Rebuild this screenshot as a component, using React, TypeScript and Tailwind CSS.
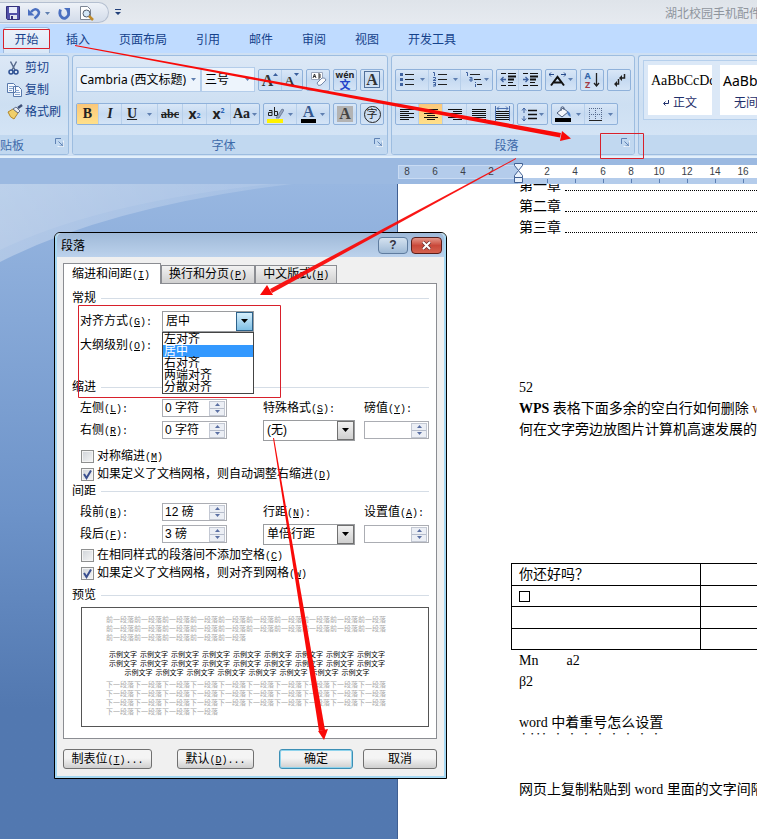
import type { ReactNode } from 'react';

export default function App() {
  return (
    <div className="relative flex min-h-screen flex-col overflow-hidden bg-[#9bb9e1] font-['Noto_Sans','Noto_Sans_CJK_SC',sans-serif] text-xs text-[#15428b]">
      <TitleBar />
      <RibbonTabs />
      <Ribbon />
      <Workspace />
      <ParagraphDialog />
      <Annotations />
    </div>
  );
}

const TitleBar = () => {
  return (
    <header className="flex h-6 shrink-0 items-center bg-gradient-to-b from-[#dfe4ea] to-[#e6eaf0]">
      <div className="flex h-[21px] w-[109px] items-center rounded-r-full border border-l-0 border-[#b4bfd0] bg-gradient-to-b from-[#eef2f8] to-[#d3dcea] pt-0.5 pl-1.5">
        <button aria-label="保存" className="mr-[7px]">
          <SaveIcon />
        </button>
        <button aria-label="撤消" className="mr-1">
          <UndoIcon />
        </button>
        <Caret />
        <button aria-label="重复" className="mr-2 ml-2">
          <RedoIcon />
        </button>
        <button aria-label="打印预览">
          <PreviewIcon />
        </button>
      </div>
      <button aria-label="自定义快速访问工具栏" className="ml-1.5">
        <svg width="6" height="7" viewBox="0 0 6 7" fill="#22407a">
          <path d="M0 0h6v1H0zM0 3h6L3 6z" />
        </svg>
      </button>
      <h1 className="ml-auto w-[92px] overflow-hidden pt-1 whitespace-nowrap text-[#8f959d]">湖北校园手机配件</h1>
    </header>
  );
};

const RibbonTabs = () => {
  return (
    <nav className="flex h-[29px] shrink-0 items-center gap-[29px] bg-[#bfdbff] pl-[3px] whitespace-nowrap">
      <a
        href="#home"
        className="-mr-[13px] flex h-[26px] w-[47px] items-center justify-center self-end rounded-t border border-b-0 border-[#9db8dd] bg-gradient-to-b from-[#edf3fb] to-[#d9e7f7] pb-0.5"
      >
        开始
      </a>
      {tabs.map((tab) => (
        <a key={tab} href="#tab" className="pt-0.5">
          {tab}
        </a>
      ))}
    </nav>
  );
};

const Ribbon = () => {
  return (
    <section className="flex h-[105px] shrink-0 gap-[3px] border-b-2 border-[#e3f0fb] bg-[#cfe0f3] pt-0.5 pb-px">
      <Group title="贴板" className="w-[69px] rounded-l-none border-l-0" titleClassName="text-left">
        <div className="flex flex-col pt-px pl-[7px]">
          <ClipboardItem label="剪切" icon={<CutIcon />} />
          <ClipboardItem label="复制" icon={<CopyIcon />} />
          <ClipboardItem label="格式刷" icon={<BrushIcon />} />
        </div>
      </Group>
      <Group title="字体" className="w-[316px]">
        <FontTools />
      </Group>
      <Group title="段落" className="w-[244px]">
        <ParagraphTools />
      </Group>
      <Group title="" className="flex-1 overflow-hidden rounded-r-none border-r-0" launcher={false}>
        <div className="mt-1 ml-1 flex h-[60px] w-40 gap-2 border border-[#b5cfec] bg-[#dbe8f7] p-1">
          <StyleCard name="正文" mark sampleClassName="font-['Liberation_Serif',serif]" />
          <StyleCard name="无间隔" />
        </div>
      </Group>
    </section>
  );
};

type GroupProps = {
  title: string;
  className: string;
  titleClassName?: string;
  launcher?: boolean;
  children: ReactNode;
};

const Group = ({ title, className, titleClassName = 'text-center', launcher = true, children }: GroupProps) => {
  return (
    <div
      className={`flex shrink-0 flex-col overflow-hidden rounded-[3px] border border-[#9dbde0] bg-gradient-to-b from-[#dce8f6] via-[#cddff2] to-[#d8e7f7] ${className}`}
    >
      <div className="flex-1">{children}</div>
      <div className="flex h-[19px] items-center bg-[#c1d8f0] text-[#3e6aaa]">
        <span className={`flex-1 pt-0.5 ${titleClassName}`}>{title}</span>
        {launcher && (
          <button aria-label={`${title}选项`} className="mr-1 w-[9px] pb-1">
            <svg width="9" height="9" viewBox="0 0 9 9" fill="none" stroke="#5f82b4">
              <path d="M.5 6V.5H6" />
              <path d="M3.500 3.500l4 4M8 4.500v3.500H4.500" />
              <path d="M8.500 2.500v6h-6" stroke="#fff" opacity=".7" />
            </svg>
          </button>
        )}
      </div>
    </div>
  );
};

const ClipboardItem = ({ label, icon }: { label: string; icon: ReactNode }) => {
  return (
    <button className="flex h-[22px] items-center gap-0.5 whitespace-nowrap">
      {icon}
      {label}
    </button>
  );
};

const StyleCard = ({ name, mark, sampleClassName = '' }: { name: string; mark?: boolean; sampleClassName?: string }) => {
  return (
    <button className="flex w-16 shrink-0 flex-col items-center overflow-hidden bg-white pt-1.5 text-[#1f2f6b]">
      <span className={`w-full overflow-hidden pl-[3px] text-left text-sm leading-5 whitespace-nowrap text-black ${sampleClassName}`}>
        AaBbCcDd
      </span>
      <span className="flex items-center gap-1 pt-1 whitespace-nowrap">
        {mark && (
          <svg width="6" height="6" viewBox="0 0 6 6" fill="none" stroke="#1f2f6b">
            <path d="M5.500 0v3.500H1M2.500 1.500l-2 2 2 2" />
          </svg>
        )}
        {name}
      </span>
    </button>
  );
};

const FontTools = () => {
  return (
    <div className="flex flex-col gap-[11px] pt-[11px] pl-[3px]">
      <div className="flex h-[25px] items-center gap-[3px]">
        <div className="flex h-[25px]">
          <Combo label="字体" value="Cambria (西文标题)" className="w-[125px]" />
          <Combo label="字号" value="三号" className="w-[54px]" />
        </div>
        <ToolGroup>
          <Tool label="增大字体" className="w-[23px]">
            <LetterA size={17} mark="up" />
          </Tool>
          <Tool label="缩小字体" className="w-5">
            <LetterA size={14} mark="down" />
          </Tool>
        </ToolGroup>
        <ToolGroup>
          <Tool label="清除格式" className="w-[22px]">
            <EraserIcon />
          </Tool>
        </ToolGroup>
        <ToolGroup>
          <Tool label="拼音指南" className="w-[22px] flex-col font-bold text-[#222]">
            <span className="text-[9px] leading-[9px]">wén</span>
            <span className="text-[11px] leading-[11px] text-[#2543c9]">文</span>
          </Tool>
        </ToolGroup>
        <ToolGroup>
          <Tool label="字符边框" className="w-[22px]">
            <span className="border border-[#51709a] px-px font-['Liberation_Serif',serif] text-base leading-[15px] font-bold text-[#333]">
              A
            </span>
          </Tool>
        </ToolGroup>
      </div>
      <div className="flex gap-[3px] font-['Liberation_Serif',serif] text-sm font-bold text-[#222]">
        <ToolGroup>
          <Tool label="加粗" active className="w-[22px]">
            B
          </Tool>
          <Tool label="倾斜" className="w-[23px] italic">
            I
          </Tool>
          <Tool label="下划线" className="w-9 gap-2.5">
            <span className="underline">U</span>
            <Caret />
          </Tool>
          <Tool label="删除线" className="w-[25px] text-xs line-through">
            abc
          </Tool>
          <Tool label="下标" className="w-6 font-['Noto_Sans',sans-serif]">
            x<sub className="text-[7px] text-[#2b62b4]">2</sub>
          </Tool>
          <Tool label="上标" className="w-6 font-['Noto_Sans',sans-serif]">
            x<sup className="text-[7px] text-[#2b62b4]">2</sup>
          </Tool>
          <Tool label="更改大小写" className="w-7 gap-0.5">
            Aa
            <Caret />
          </Tool>
        </ToolGroup>
        <ToolGroup>
          <Tool label="突出显示" className="w-[33px] gap-1">
            <HighlightIcon />
            <Caret />
          </Tool>
          <Tool label="字体颜色" className="w-8 gap-1">
            <span className="border-b-4 border-black px-0.5 text-base leading-[14px] text-[#35588f]">A</span>
            <Caret />
          </Tool>
        </ToolGroup>
        <ToolGroup>
          <Tool label="字符底纹" className="w-[22px]">
            <span className="bg-[#b3b3b3] px-0.5 text-base leading-4 text-[#444]">A</span>
          </Tool>
        </ToolGroup>
        <ToolGroup>
          <Tool label="带圈字符" className="w-[22px]">
            <span className="flex size-[17px] items-center justify-center rounded-full border border-[#222] font-['Noto_Sans_CJK_SC',sans-serif] text-[11px] font-normal">
              字
            </span>
          </Tool>
        </ToolGroup>
      </div>
    </div>
  );
};

const ParagraphTools = () => {
  return (
    <div className="flex flex-col gap-[11px] pt-[11px] pl-[3px]">
      <div className="flex h-[25px] items-center gap-[3px]">
        <ToolGroup>
          <Tool label="项目符号" className="w-[33px] gap-1.5">
            <svg width="15" height="15" viewBox="0 0 15 15">
              <path d="M6 2.500h9M6 7.500h9M6 12.500h9" stroke="#222" />
              <path d="M1 1h3v3H1zM1 6h3v3H1zM1 11h3v3H1z" fill="#3f62a0" />
            </svg>
            <Caret />
          </Tool>
          <Tool label="编号" className="w-8 gap-1.5">
            <svg width="15" height="15" viewBox="0 0 15 15" fill="none">
              <path d="M6 2.500h9M6 7.500h9M6 12.500h9" stroke="#222" />
              <path d="M1 .5h1.500V4M1 5.500h2.500v1.500L1 8.500h3M1 10.500h2.500v3.500H1M1.500 12.500h2" stroke="#3f62a0" />
            </svg>
            <Caret />
          </Tool>
          <Tool label="多级列表" className="w-[31px] gap-0.5">
            <svg width="17" height="17" viewBox="0 0 17 17" fill="none">
              <path d="M5 3.500h10M9 8.500h7M12 13.500h5" stroke="#222" />
              <path d="M1 1.500h1.500V5M4.500 6.500h2.500v3.500h-2v-2h2M10.500 11v1M10.500 13v3" stroke="#3f62a0" />
            </svg>
            <Caret />
          </Tool>
        </ToolGroup>
        <ToolGroup>
          <Tool label="减少缩进" className="w-[22px]">
            <IndentIcon arrow="M6 7.500H1M3.500 5l-2.500 2.500 2.500 2.500" />
          </Tool>
          <Tool label="增加缩进" className="w-[22px]">
            <IndentIcon arrow="M1 7.500h5M3.500 5L6 7.500 3.500 10" />
          </Tool>
        </ToolGroup>
        <ToolGroup>
          <Tool label="中文版式" className="w-[30px] gap-0.5">
            <svg width="17" height="15" viewBox="0 0 17 15" fill="none">
              <path d="M2 13.500L8.500 5l6.500 8.500M5 10.500h7" stroke="#111" strokeWidth="2" />
              <path d="M5 2.500H0M2 .5l-2 2 2 2M12 2.500h5M15 .5l2 2-2 2" stroke="#274b8c" />
            </svg>
            <Caret />
          </Tool>
        </ToolGroup>
        <ToolGroup>
          <Tool label="排序" className="w-[22px] gap-0.5">
            <span className="flex flex-col text-[9px] leading-[9px] font-bold">
              <span className="text-[#3163a8]">A</span>
              <span className="text-[#a23a44]">Z</span>
            </span>
            <svg width="7" height="14" viewBox="0 0 7 14" fill="none" stroke="#222">
              <path d="M3.500 0v13M1 10l2.500 3L6 10" strokeWidth="1.300" />
            </svg>
          </Tool>
        </ToolGroup>
        <ToolGroup>
          <Tool label="显示编辑标记" className="w-[22px]">
            <svg width="13" height="14" viewBox="0 0 13 14" fill="none" stroke="#222">
              <path d="M11.500 1v4H7M5.500 6v5H2" strokeWidth="1.500" />
              <path d="M9 2v6L6 5zM4 8v6l-3-3z" fill="#222" stroke="none" />
            </svg>
          </Tool>
        </ToolGroup>
      </div>
      <div className="flex gap-[3px]">
        <ToolGroup>
          <Tool label="左对齐" className="w-[23px]">
            <LinesIcon d="M0 1.500h14M0 3.500h9M0 5.500h14M0 7.500h9M0 9.500h14M0 11.500h9" />
          </Tool>
          <Tool label="居中" active className="w-6">
            <LinesIcon d="M0 1.500h14M3 3.500h8M0 5.500h14M3 7.500h8M0 9.500h14M3 11.500h8" />
          </Tool>
          <Tool label="右对齐" className="w-6">
            <LinesIcon d="M0 1.500h14M5 3.500h9M0 5.500h14M5 7.500h9M0 9.500h14M5 11.500h9" />
          </Tool>
          <Tool label="两端对齐" className="w-6">
            <LinesIcon d="M0 1.500h14M0 3.500h14M0 5.500h14M0 7.500h14M0 9.500h14M0 11.500h14" />
          </Tool>
          <Tool label="分散对齐" className="w-[22px]">
            <svg width="15" height="16" viewBox="0 0 15 16" fill="none">
              <path d="M1 5.500h13M1 7.500h13M1 9.500h13M1 11.500h13M1 13.500h13" stroke="#111" />
              <path d="M.5 0v15M14.500 0v15M2 2.500h11M4 .5l-2 2 2 2M11 .5l2 2-2 2" stroke="#4a6fae" />
            </svg>
          </Tool>
        </ToolGroup>
        <ToolGroup>
          <Tool label="行距" className="w-[29px] gap-0.5">
            <svg width="16" height="15" viewBox="0 0 16 15" fill="none">
              <path d="M7 3.500h9M7 7.500h9M7 11.500h9" stroke="#111" strokeWidth="1.400" />
              <path d="M3 1v5M1 3.500L3 1l2 2.500M3 9v5M1 11.500L3 14l2-2.500" stroke="#3f62a0" />
            </svg>
            <Caret />
          </Tool>
        </ToolGroup>
        <ToolGroup>
          <Tool label="底纹" className="w-[33px] gap-1">
            <svg width="17" height="16" viewBox="0 0 17 16">
              <path d="M2 7l6-5 5 4-6 5z" fill="#f4f6fa" stroke="#4b5c7c" />
              <path d="M6 5V1.500q1.500-1.500 3 0V4" fill="none" stroke="#4b5c7c" />
              <path d="M12 5q4 1 3.500 6-2-1-3-3z" fill="#4f7fc4" />
              <path d="M0 12h16v4H0z" />
            </svg>
            <Caret />
          </Tool>
          <Tool label="边框" className="w-8 gap-1.5">
            <svg width="13" height="13" viewBox="0 0 13 13" fill="none" stroke="#56698c">
              <path d="M.5 0v13M6.500 0v13M12.500 0v13M0 .5h13M0 6.500h13" strokeDasharray="1 1" />
              <path d="M0 12.500h13" stroke="#222" />
            </svg>
            <Caret />
          </Tool>
        </ToolGroup>
      </div>
    </div>
  );
};

const Combo = ({ label, value, className }: { label: string; value: string; className: string }) => {
  return (
    <div className={`flex items-center border border-[#b4cdea] bg-[#edf4fc] pr-1 pl-[3px] ${className}`}>
      <input aria-label={label} defaultValue={value} className="w-0 flex-1 bg-transparent text-xs text-black outline-none" />
      <span className="pl-1">
        <Caret />
      </span>
    </div>
  );
};

const ToolGroup = ({ children }: { children: ReactNode }) => {
  return (
    <div className="flex h-[22px] shrink-0 divide-x divide-[#b7cfea] overflow-hidden rounded-[2px] border border-[#8fb1da] bg-gradient-to-b from-[#d9e7f7] via-[#c6daf1] to-[#d4e4f6]">
      {children}
    </div>
  );
};

type ToolProps = { label: string; className: string; active?: boolean; children: ReactNode };

const Tool = ({ label, className, active, children }: ToolProps) => {
  return (
    <button
      aria-label={label}
      className={`flex shrink-0 items-center justify-center ${active ? 'bg-gradient-to-b from-[#fbc779] to-[#ffe08a]' : ''} ${className}`}
    >
      {children}
    </button>
  );
};

const Workspace = () => {
  return (
    <main className="flex flex-1 flex-col">
      <div className="flex h-[26px] shrink-0 items-start bg-[#9bb9e1] pt-[7px] pl-[398px] font-['Liberation_Sans',sans-serif] text-[10px] text-[#3b3f48]">
        <div className="flex h-[14px] w-[120px] shrink-0 justify-end overflow-hidden border border-[#c9dbf3] bg-[#b4cceb] pr-3">
          {['8', '6', '4', '2'].map((n) => (
            <span key={n} className="w-7 shrink-0 text-center leading-3">
              {n}
            </span>
          ))}
        </div>
        <div className="flex h-[19px] flex-1 overflow-hidden bg-gradient-to-b from-white from-[13px] to-[#b4cceb] to-[13px] pl-[15px]">
          {['2', '4', '6', '8', '10', '12', '14', '16'].map((n) => (
            <span key={n} className="flex w-7 shrink-0 flex-col items-center leading-[14px]">
              {n}
              <i className="h-1 w-px bg-[#5c7fb3]" />
            </span>
          ))}
        </div>
      </div>
      <div className="flex flex-1 bg-gradient-to-b from-[#98b7e1] via-[#6d93c9] via-50% to-[#5278b0] to-80%">
        <div className="relative w-[398px] shrink-0 overflow-hidden border-r border-[#3f5f92]">
          <svg className="absolute inset-0" width="398" height="655" viewBox="0 0 398 655">
            <defs>
              <linearGradient id="swoosh" x2="1">
                <stop stopColor="#fff" stopOpacity=".3" />
                <stop offset="1" stopColor="#fff" stopOpacity=".12" />
              </linearGradient>
            </defs>
            <path d="M0 0h292Q110 22 0 78z" fill="url(#swoosh)" />
            <path d="M0 0h272Q100 18 0 66z" fill="#fff" opacity=".08" />
          </svg>
        </div>
        <Page />
      </div>
    </main>
  );
};

const Page = () => {
  return (
    <article className="flex flex-1 flex-col overflow-hidden bg-white pl-[121px] font-['Liberation_Serif','Noto_Sans_CJK_SC',serif] text-sm leading-[21px] whitespace-nowrap text-black">
      <div className="-mt-[9px]">
        {['第一章', '第二章', '第三章'].map((chapter) => (
          <p key={chapter} className="flex h-[21px] gap-1">
            {chapter}
            <span className="mb-[5px] flex-1 border-b border-dotted border-black" />
          </p>
        ))}
      </div>
      <p className="mt-[139px] h-[21px]">52</p>
      <p className="h-[21px]">
        <b>WPS</b> 表格下面多余的空白行如何删除 <span className="text-[#8a3b12]">word</span>
      </p>
      <p className="h-[21px]">何在文字旁边放图片计算机高速发展的</p>
      <table className="mt-[123px] -ml-2 w-[380px] table-fixed border-collapse">
        <tbody>
          {['你还好吗？', '□', '', ''].map((text, i) => (
            <tr key={i} className="h-[22px] even:h-[21px]">
              <td className="w-[189px] border border-black p-0 pl-[7px] leading-5">
                {text === '□' ? <span className="block size-[11px] border border-black" /> : text}
              </td>
              <td className="border border-black p-0" />
            </tr>
          ))}
        </tbody>
      </table>
      <p className="flex h-[21px] gap-7">
        <span>Mn</span>
        <span>a2</span>
      </p>
      <p className="h-[21px]">β2</p>
      <p className="mt-5 h-[21px] [text-emphasis-position:under] [text-emphasis-style:dot]">word 中着重号怎么设置</p>
      <p className="mt-[46px] h-[21px]">网页上复制粘贴到 word 里面的文字间隔</p>
    </article>
  );
};

const ParagraphDialog = () => {
  return (
    <div
      role="dialog"
      aria-label="段落"
      className="absolute top-[232px] left-[54px] w-[393px] rounded-t-md border border-black bg-[#f0f0f0] font-['Liberation_Sans','Noto_Sans_CJK_SC',sans-serif] text-xs text-black"
    >
      <div className="rounded-t-[5px] border-2 border-t-0 border-[#a5d8f3]">
        <div className="flex h-6 items-center gap-[3px] rounded-t-[5px] bg-gradient-to-b from-[#9fb9d8] to-[#bcd2ec] pr-0.5 pl-1">
          <h2 className="flex-1 pt-0.5">段落</h2>
          <button className="h-[17px] w-[30px] rounded-sm border border-[#5f7c9f] bg-gradient-to-b from-[#d5e2f0] to-[#9fbad6] text-xs leading-[15px] font-bold text-[#334]">
            ?
          </button>
          <button
            aria-label="关闭"
            className="flex h-[17px] w-[31px] items-center justify-center rounded-sm border border-[#5a1d19] bg-gradient-to-b from-[#e3968a] via-[#c9483a] to-[#d4614e]"
          >
            <svg width="11" height="9" viewBox="0 0 11 9">
              <path d="M2 1l7 7M9 1L2 8" stroke="#6b3030" strokeWidth="3.500" />
              <path d="M2 1l7 7M9 1L2 8" stroke="#fff" strokeWidth="2" />
            </svg>
          </button>
        </div>
        <div className="px-1.5 pt-1.5 pb-[7px]">
          <div role="tablist" className="flex h-[21px] items-end">
            <DialogTab text="缩进和间距" k="I" active />
            <DialogTab text="换行和分页" k="P" />
            <DialogTab text="中文版式" k="H" />
          </div>
          <IndentPanel />
          <div className="mt-2.5 flex gap-[25px]">
            <DialogButton className="w-[89px] border-[#707070]">
              <Mnemonic text="制表位" k="T" suffix="..." />
            </DialogButton>
            <DialogButton className="w-[77px] border-[#707070]">
              <Mnemonic text="默认" k="D" suffix="..." />
            </DialogButton>
            <div className="flex gap-2.5">
              <DialogButton className="w-[74px] border-[#3c8fb5] ring-1 ring-[#8fd3ec] ring-inset">确定</DialogButton>
              <DialogButton className="w-[74px] border-[#707070]">取消</DialogButton>
            </div>
          </div>
        </div>
      </div>
    </div>
  );
};

const IndentPanel = () => {
  return (
    <div className="-mt-px mr-px border border-[#8b8d92] bg-white pr-[7px] pb-[11px] pl-2">
      <SectionTitle className="mt-1.5">常规</SectionTitle>
      <div className={`${gridClassName} h-6 pt-0.5`}>
        <FieldLabel id="align" text="对齐方式" k="G" />
        <div className="relative">
          <SelectBox id="align" options={alignments} defaultValue="居中" open />
          <ul className="absolute top-[21px] left-0 w-[92px] border border-[#444] bg-white">
            {alignments.map((name) => (
              <li key={name} className={`h-3 pl-px leading-3 ${name === '居中' ? 'bg-[#3399ff] text-white' : ''}`}>
                {name}
              </li>
            ))}
          </ul>
        </div>
      </div>
      <div className={`${gridClassName} h-6 pt-0.5`}>
        <span>
          <Mnemonic text="大纲级别" k="O" suffix=":" />
        </span>
      </div>
      <SectionTitle className="mt-[23px]">缩进</SectionTitle>
      <div className={gridClassName}>
        <FieldLabel id="left" text="左侧" k="L" />
        <Spinner id="left" value="0 字符" />
        <FieldLabel id="special" text="特殊格式" k="S" />
        <FieldLabel id="by" text="磅值" k="Y" />
        <FieldLabel id="right" text="右侧" k="R" />
        <Spinner id="right" value="0 字符" />
        <SelectBox id="special" options={['(无)', '首行缩进', '悬挂缩进']} defaultValue="(无)" />
        <Spinner id="by" value="" />
      </div>
      <div className="mt-1.5">
        <CheckRow text="对称缩进" k="M" />
        <CheckRow text="如果定义了文档网格，则自动调整右缩进" k="D" checked />
      </div>
      <SectionTitle>间距</SectionTitle>
      <div className={gridClassName}>
        <FieldLabel id="before" text="段前" k="B" />
        <Spinner id="before" value="12 磅" />
        <FieldLabel id="line" text="行距" k="N" />
        <FieldLabel id="at" text="设置值" k="A" />
        <FieldLabel id="after" text="段后" k="F" />
        <Spinner id="after" value="3 磅" />
        <SelectBox id="line" options={['单倍行距', '1.5 倍行距', '2 倍行距']} defaultValue="单倍行距" />
        <Spinner id="at" value="" />
      </div>
      <div className="mt-px">
        <CheckRow text="在相同样式的段落间不添加空格" k="C" />
        <CheckRow text="如果定义了文档网格，则对齐到网格" k="W" checked />
      </div>
      <SectionTitle className="mt-[5px]">预览</SectionTitle>
      <Preview />
    </div>
  );
};

const Preview = () => {
  return (
    <div className="mt-1 ml-[9px] h-[120px] border border-[#555] pt-[7px] pl-6 text-[7px] leading-[9px] whitespace-nowrap text-[#aaa]">
      {[10, 10, 5].map((n, i) => (
        <p key={i}>{'前一段落'.repeat(n)}</p>
      ))}
      <div className="my-2 mb-[3px] w-[282px] text-center text-black">
        {[9, 9, 8].map((n, i) => (
          <p key={i} className="flex justify-center gap-[3px]">
            {Array.from({ length: n }, (_, j) => (
              <span key={j}>示例文字</span>
            ))}
          </p>
        ))}
      </div>
      {[10, 10, 10, 4].map((n, i) => (
        <p key={i}>{'下一段落'.repeat(n)}</p>
      ))}
    </div>
  );
};

const Mnemonic = ({ text, k, suffix = '' }: { text: string; k: string; suffix?: string }) => {
  return (
    <>
      {text}
      <span className="font-['Liberation_Mono',monospace] text-[10px]">
        (<u>{k}</u>){suffix}
      </span>
    </>
  );
};

const DialogTab = ({ text, k, active }: { text: string; k: string; active?: boolean }) => {
  return (
    <button
      role="tab"
      aria-selected={!!active}
      className={`border border-[#8b8d92] whitespace-nowrap ${
        active ? 'relative h-[21px] border-b-0 bg-white pr-2.5 pl-2' : 'h-[19px] bg-gradient-to-b from-[#f2f2f2] to-[#d0d0d0] px-[7px]'
      }`}
    >
      <Mnemonic text={text} k={k} />
    </button>
  );
};

const SectionTitle = ({ children, className = '' }: { children: ReactNode; className?: string }) => {
  return (
    <h3 className={`mb-0.5 flex h-4 items-center gap-[5px] ${className}`}>
      {children}
      <span className="h-px flex-1 bg-[#d5dde6]" />
    </h3>
  );
};

const FieldLabel = ({ id, text, k }: { id: string; text: string; k: string }) => {
  return (
    <label htmlFor={id} className="whitespace-nowrap">
      <Mnemonic text={text} k={k} suffix=":" />
    </label>
  );
};

type SelectBoxProps = { id: string; options: string[]; defaultValue: string; open?: boolean };

const SelectBox = ({ id, options, defaultValue, open }: SelectBoxProps) => {
  return (
    <div className="relative h-[21px] w-[92px]">
      <select
        id={id}
        defaultValue={defaultValue}
        className="h-full w-full appearance-none border border-[#9a9c9f] bg-white pl-[3px] text-xs leading-4 outline-none"
      >
        {options.map((option) => (
          <option key={option}>{option}</option>
        ))}
      </select>
      <span
        className={`pointer-events-none absolute top-px right-px flex h-[19px] w-[17px] items-center justify-center border ${
          open ? 'border-[#2c628b] bg-gradient-to-b from-[#d5effc] to-[#7fbfe4]' : 'border-[#707070] bg-gradient-to-b from-[#f2f2f2] to-[#cfcfcf]'
        }`}
      >
        <svg width="7" height="4" viewBox="0 0 7 4">
          <path d="M0 0h7L3.500 4z" />
        </svg>
      </span>
    </div>
  );
};

const Spinner = ({ id, value }: { id: string; value: string }) => {
  return (
    <div className="flex h-[18px] w-[65px] items-center border border-[#abadb3] bg-white pr-px">
      <input id={id} defaultValue={value} className="h-4 w-0 flex-1 pl-0.5 text-xs outline-none" />
      <span className="flex h-[15px] w-4 flex-col divide-y divide-[#b5bccb] border border-[#c3c8d3] bg-[#eceff5]">
        <button aria-label="增加" className="flex flex-1 items-center justify-center">
          <svg width="5" height="3" viewBox="0 0 5 3" fill="#5a6fa3">
            <path d="M0 3h5L2.500 0z" />
          </svg>
        </button>
        <button aria-label="减少" className="flex flex-1 items-center justify-center">
          <svg width="5" height="3" viewBox="0 0 5 3" fill="#5a6fa3">
            <path d="M0 0h5L2.500 3z" />
          </svg>
        </button>
      </span>
    </div>
  );
};

const CheckRow = ({ text, k, checked }: { text: string; k: string; checked?: boolean }) => {
  return (
    <label className="flex h-[18px] items-center pl-[9px] whitespace-nowrap">
      <span className="relative mr-[3px] size-[13px]">
        <input
          type="checkbox"
          defaultChecked={checked}
          className="peer block size-[13px] appearance-none border border-[#8e8f8f] bg-gradient-to-br from-[#cfd3d8] to-[#f6f6f6] ring-1 ring-[#f4f4f4] ring-inset"
        />
        <svg className="pointer-events-none absolute inset-0 hidden peer-checked:block" width="13" height="13" viewBox="0 0 13 13" fill="none">
          <path d="M3 6l2.500 4L10 2.500" stroke="#3a4f8f" strokeWidth="2" />
        </svg>
      </span>
      <span>
        <Mnemonic text={text} k={k} />
      </span>
    </label>
  );
};

const DialogButton = ({ className, children }: { className: string; children: ReactNode }) => {
  return (
    <button className={`h-5 rounded-[3px] border bg-gradient-to-b from-[#f4f4f4] from-45% to-[#cfcfcf] leading-[18px] ${className}`}>
      {children}
    </button>
  );
};

// Red boxes and arrows laid over the window to show the order of the steps
const Annotations = () => {
  return (
    <svg className="pointer-events-none absolute top-0 left-0" width="757" height="839" viewBox="0 0 757 839">
      <g fill="none" stroke="#d8202b">
        <path d="M3.500 29.500h46v19h-46zM600.500 133.500h43v25h-43zM78.500 305.500h202v92h-202z" />
      </g>
      <g stroke="#3f5f92" fill="#e9f1fb">
        <path d="M514.500 163.500h8v2l-4 5-4-5zM514.500 177.500v-2l4-5 4 5v2zM514.500 177.500h8v5h-8z" />
      </g>
      <g fill="#f90a08">
        <path d="M75 45L561 133L560 137.500L75 46z" />
        <path d="M562 131L571 138.500L560 141z" />
        <path d="M516 158L270 289L272 293L516 159z" opacity=".95" />
        <path d="M260 295L267 285L273 295z" />
        <path d="M273 438L319 731L325 730L274 438z" />
        <path d="M318 731L328 729L324 740z" />
      </g>
    </svg>
  );
};

const Caret = () => {
  return (
    <svg width="5" height="3" viewBox="0 0 5 3" fill="#5f7fb0" className="shrink-0">
      <path d="M0 0h5L2.500 3z" />
    </svg>
  );
};

const LetterA = ({ size, mark }: { size: 14 | 17; mark: 'up' | 'down' }) => {
  return (
    <>
      <span
        className={`self-end font-['Liberation_Serif',serif] leading-[19px] font-bold text-[#333] ${size === 17 ? 'text-base' : 'text-[13px]'}`}
      >
        A
      </span>
      <svg width="5" height="3" viewBox="0 0 5 3" fill="#3a5f9d" className="mt-[3px] shrink-0 self-start">
        <path d={mark === 'up' ? 'M0 3h5L2.500 0z' : 'M0 0h5L2.500 3z'} />
      </svg>
    </>
  );
};

const IndentIcon = ({ arrow }: { arrow: string }) => {
  return (
    <svg width="16" height="15" viewBox="0 0 16 15" fill="none" stroke="#111">
      <path d="M1 1.500h5M8 1.500h8M1 13.500h5M8 13.500h8M8 10.500h5" />
      <path d="M8 4.500h8M8 7.500h6" strokeWidth="2" />
      <path d={arrow} stroke="#3f62a0" strokeWidth="1.300" />
    </svg>
  );
};

const LinesIcon = ({ d }: { d: string }) => {
  return (
    <svg width="14" height="13" viewBox="0 0 14 13" stroke="#111">
      <path d={d} />
    </svg>
  );
};

const SaveIcon = () => {
  return (
    <svg width="14" height="14" viewBox="0 0 14 14">
      <path d="M.5.5h13v13h-12l-1-1z" fill="#5150a8" stroke="#33307c" />
      <path d="M3 1h8v6H3z" fill="#e7ecfa" />
      <path d="M4 9h7v4H4z" fill="#dfe3ee" />
      <path d="M5 10h2v3H5z" fill="#33307c" />
    </svg>
  );
};

const UndoIcon = () => {
  return (
    <svg width="14" height="13" viewBox="0 0 14 13" fill="none">
      <path d="M4 5Q8 .5 11 3.500T7.500 11.500" stroke="#4a6fc0" strokeWidth="2.500" />
      <path d="M1 2V8.500h6.500z" fill="#4a6fc0" />
    </svg>
  );
};

const RedoIcon = () => {
  return (
    <svg width="13" height="13" viewBox="0 0 13 13" fill="none">
      <path d="M2.500 2.500Q.5 8 4 10.500T10.500 8Q11 5 9.500 3" stroke="#4a6fc0" strokeWidth="2.800" />
      <path d="M6 1h6v6z" fill="#4a6fc0" />
    </svg>
  );
};

const PreviewIcon = () => {
  return (
    <svg width="15" height="15" viewBox="0 0 15 15">
      <path d="M1.500.5h7l3 3v10h-10z" fill="#fff" stroke="#7d8694" />
      <circle cx="7.500" cy="7.500" r="3.500" fill="#d4e7f7" stroke="#555f6e" />
      <path d="M10 10l4 4" stroke="#c08a2a" strokeWidth="2.500" />
    </svg>
  );
};

const CutIcon = () => {
  return (
    <svg width="16" height="16" viewBox="0 0 16 16" fill="none">
      <path d="M3.500 1.500L8 10M9.500 1.500L5 10" stroke="#56698c" strokeWidth="1.500" />
      <circle cx="4" cy="12" r="2" stroke="#2c4f92" strokeWidth="1.500" />
      <circle cx="9" cy="12" r="2" stroke="#2c4f92" strokeWidth="1.500" />
    </svg>
  );
};

const CopyIcon = () => {
  return (
    <svg width="16" height="16" viewBox="0 0 16 16" fill="#f6faff" stroke="#5878ab">
      <path d="M.5 1.500h6l2 2v7h-8zM6.500 4.500h5l3 3v7h-8z" />
      <path d="M2 4.500h4M2 6.500h4M2 8.500h3M8 8.500h4M8 10.500h5M8 12.500h5" stroke="#8aa6d0" />
    </svg>
  );
};

const BrushIcon = () => {
  return (
    <svg width="16" height="16" viewBox="0 0 16 16">
      <path d="M1 8l5-3 5 4-4 6q-4-1-6-7z" fill="#f0cf6a" stroke="#b0862e" />
      <path d="M6 5l3-2 4 4-2 2z" fill="#e8ecf4" stroke="#68748c" />
      <path d="M11 4l4-3" stroke="#3d4f77" strokeWidth="2.500" />
    </svg>
  );
};

const EraserIcon = () => {
  return (
    <svg width="17" height="17" viewBox="0 0 17 17">
      <path d="M1.500 1.500h11v7h-11z" fill="#fff" stroke="#9aa7bd" />
      <path d="M3 7l1.500-4L6 7M3.500 5.500h2M8 3h2v4H8M8 5h2" fill="none" stroke="#333" />
      <path d="M7 12l5-5q3-1 4 2l-5 5q-3 2-4-2z" fill="#fbfcfe" stroke="#7688a8" />
    </svg>
  );
};

const HighlightIcon = () => {
  return (
    <svg width="17" height="17" viewBox="0 0 17 17" fill="none">
      <path d="M0 13h16v4H0z" fill="#fff200" />
      <path d="M2 4.500h3v5H1.500v-3H5M7.500 1v8.500h3v-4h-3" stroke="#222" />
      <path d="M9 12l6-9 2 1-5 8z" fill="#9aa7bd" stroke="#55698c" strokeWidth=".7" />
    </svg>
  );
};

const tabs = ['插入', '页面布局', '引用', '邮件', '审阅', '视图', '开发工具'];
const alignments = ['左对齐', '居中', '右对齐', '两端对齐', '分散对齐'];

const gridClassName = 'ml-2 grid auto-rows-[22px] grid-cols-[82px_101px_101px_65px] items-center';
